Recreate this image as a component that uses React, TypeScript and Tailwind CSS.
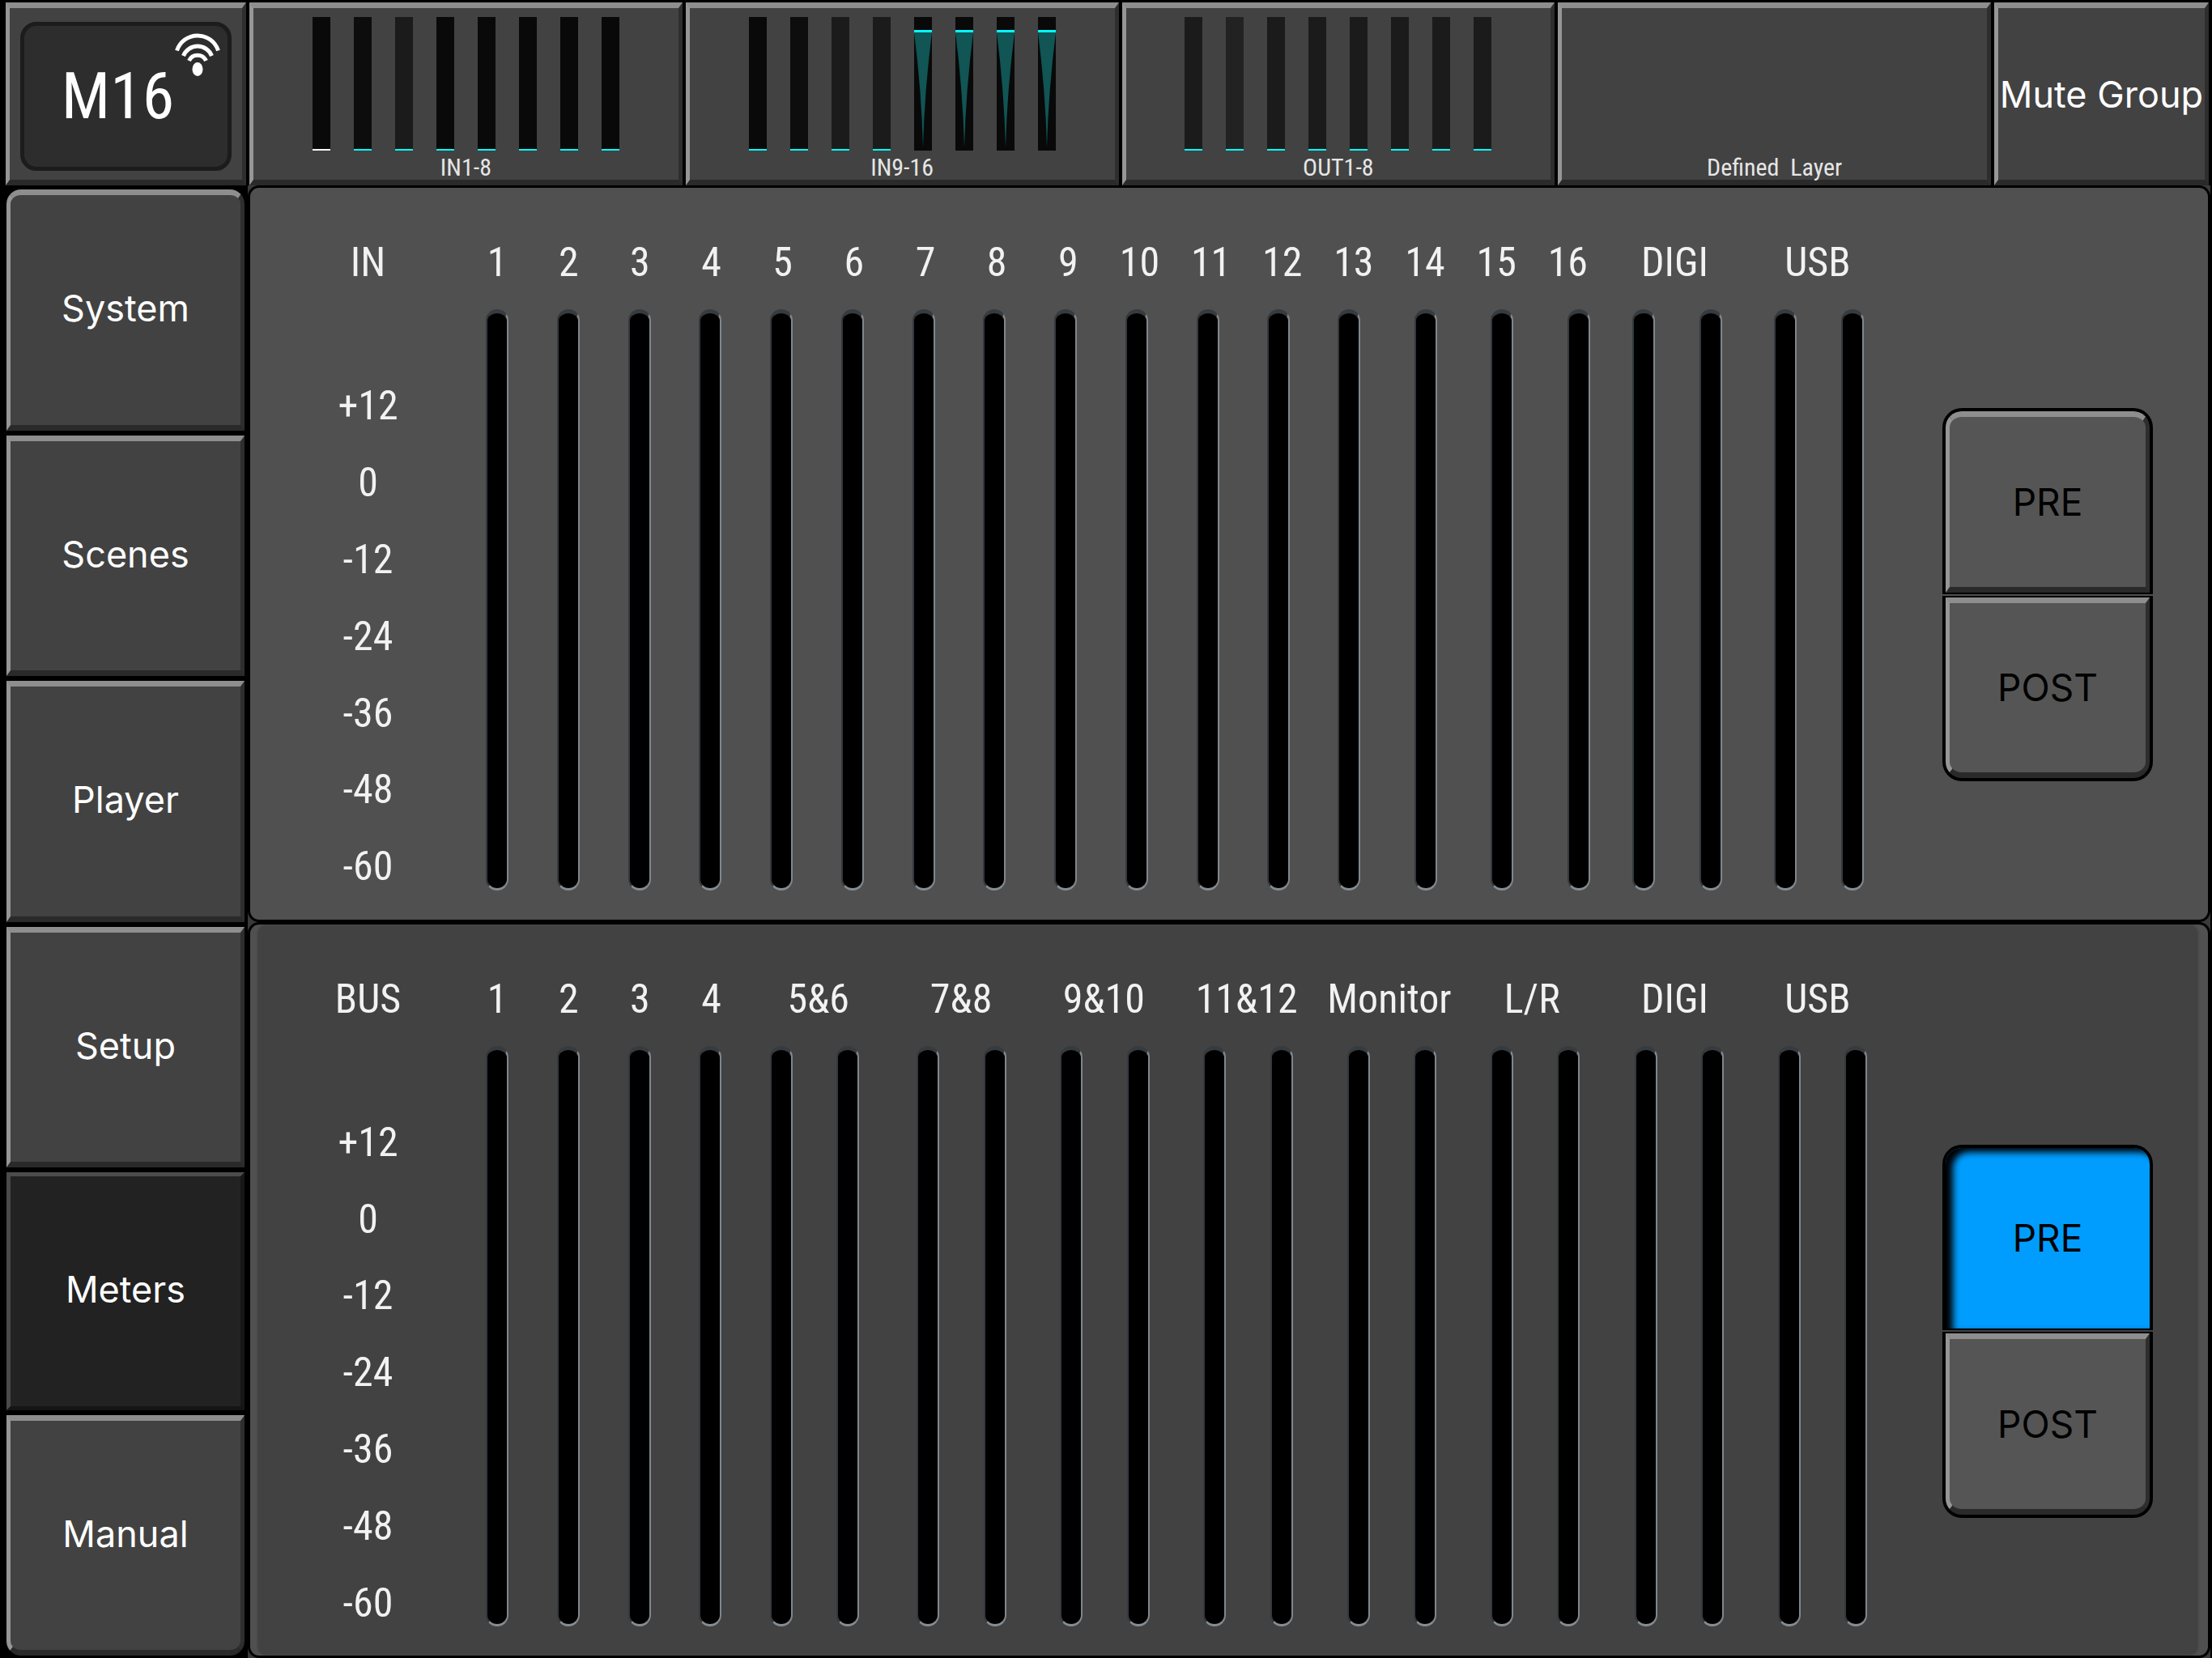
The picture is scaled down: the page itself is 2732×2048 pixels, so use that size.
import { useState } from 'react';
import clsx from 'clsx';

type Meter = { shade: string; level?: 'low' | 'selected' | 'peak' };
type Label = { text: string; span?: number };

const DARK = 'bg-[#090909]';
const MID = 'bg-[#0d0d0d]';
const SOFT = 'bg-[#1b1b1b]';

const layers: { name: string; meters: Meter[] }[] = [
  {
    name: 'IN1-8',
    meters: [
      { shade: DARK, level: 'selected' },
      { shade: MID },
      { shade: SOFT },
      { shade: DARK },
      { shade: DARK },
      { shade: DARK },
      { shade: DARK },
      { shade: DARK },
    ],
  },
  {
    name: 'IN9-16',
    meters: [
      { shade: DARK },
      { shade: MID },
      { shade: SOFT },
      { shade: SOFT },
      { shade: DARK, level: 'peak' },
      { shade: DARK, level: 'peak' },
      { shade: DARK, level: 'peak' },
      { shade: DARK, level: 'peak' },
    ],
  },
  {
    name: 'OUT1-8',
    meters: [
      { shade: SOFT },
      { shade: 'bg-[#222222]' },
      { shade: SOFT },
      { shade: SOFT },
      { shade: SOFT },
      { shade: SOFT },
      { shade: SOFT },
      { shade: SOFT },
    ],
  },
  { name: 'Defined\u00a0 Layer', meters: [] },
];

const menu = ['System', 'Scenes', 'Player', 'Setup', 'Meters', 'Manual'];
const scale = ['+12', '0', '-12', '-24', '-36', '-48', '-60'];

const inLabels: Label[] = [
  ...Array.from({ length: 16 }, (_, i) => ({ text: String(i + 1) })),
  { text: 'DIGI', span: 2 },
  { text: 'USB', span: 2 },
];

const busLabels: Label[] = [
  { text: '1' },
  { text: '2' },
  { text: '3' },
  { text: '4' },
  { text: '5&6', span: 2 },
  { text: '7&8', span: 2 },
  { text: '9&10', span: 2 },
  { text: '11&12', span: 2 },
  { text: 'Monitor', span: 2 },
  { text: 'L/R', span: 2 },
  { text: 'DIGI', span: 2 },
  { text: 'USB', span: 2 },
];

// distance from each slot to the next one, as relative weights
const inPitch = [88, 88, 87, 88, 88, 88, 87, 88, 88, 88, 87, 87, 95, 94, 95, 80, 83, 92, 83];
const busPitch = [88, 88, 87, 88, 82, 99, 83, 94, 83, 94, 83, 95, 82, 95, 82, 96, 82, 95, 82];

const bevel =
  'border-t-[7px] border-l-[5px] border-r-[5px] border-b-[7px] border-t-[#8e8e8e] border-l-[#969696] border-r-[#2e2e2e] border-b-[#2a2a2a]';
const narrow = "font-['Liberation_Sans_Narrow','Roboto_Condensed','Liberation_Sans',sans-serif]";

function MiniMeter({ shade, level = 'low' }: Meter) {
  return (
    <div className={clsx('flex w-[22px] flex-col', shade)}>
      {level === 'peak' ? (
        <>
          <div className="mt-4 h-[3px] bg-[#00ffff]" />
          <svg viewBox="0 0 22 142" className="h-[142px] w-full" preserveAspectRatio="none">
            <path d="M0 0H22Q13 70 11 142Q9 70 0 0Z" fill="#115555" />
          </svg>
        </>
      ) : (
        <div className={clsx('mt-auto h-[2px]', level === 'selected' ? 'bg-white' : 'bg-[#00ffff]')} />
      )}
    </div>
  );
}

function Logo() {
  return (
    <button className={clsx('flex w-[297px] shrink-0 bg-[#424242] px-[13px] pt-[17px] pb-[11px]', bevel)}>
      <div className="relative flex h-full w-full items-center justify-center rounded-[20px] border-[5px] border-[#1c1c1c] bg-[#2d2d2d] pr-5">
        <span className={clsx('text-[80px] leading-none text-white', narrow)}>M16</span>
        <svg viewBox="0 0 58 56" className="absolute top-2 right-2 h-14 w-[58px]" fill="none" stroke="#fff" strokeWidth="5">
          <path d="M3.5 22.5A26.8 26.8 0 0 1 54.5 22.5" />
          <path d="M11.5 29A18.8 18.8 0 0 1 46.5 29" />
          <path d="M18.5 35A11.6 11.6 0 0 1 39.5 35" />
          <ellipse cx="29" cy="45.5" rx="6.5" ry="8.5" fill="#fff" stroke="none" />
        </svg>
      </div>
    </button>
  );
}

function PrePost({ initial }: { initial?: string }) {
  const [mode, setMode] = useState(initial);

  return (
    <div className="flex h-[461px] w-[260px] flex-col gap-[2px]">
      {['PRE', 'POST'].map((name, i) => (
        <div
          key={name}
          className={clsx('flex flex-1 bg-black px-1', i === 0 ? 'rounded-t-[24px] pt-1 pb-[2px]' : 'rounded-b-[24px] pt-[2px] pb-1')}
        >
          <button
            onClick={() => setMode(name)}
            aria-pressed={mode === name}
            className={clsx(
              'flex-1 text-[46px] leading-none text-black',
              i === 0 ? 'rounded-t-[20px]' : 'rounded-b-[20px]',
              mode === name ? 'bg-[#009dff] shadow-[inset_9px_5px_9px_#000]' : ['bg-[#555555]', bevel],
            )}
          >
            {name}
          </button>
        </div>
      ))}
    </div>
  );
}

type PanelProps = {
  title: string;
  labels: Label[];
  pitch: number[];
  className: string;
  slotsClassName: string;
  initial?: string;
};

function MeterPanel({ title, labels, pitch, className, slotsClassName, initial }: PanelProps) {
  const columns = pitch.map((p) => `minmax(0,${p}fr)`).join(' ') + ' 28px';

  return (
    <section className={clsx('flex flex-1 rounded-[14px] border-[3px] border-black', className)}>
      <div className={clsx('flex w-[261px] flex-col pl-[30px] text-center text-[50px] leading-none text-[#f2f2f2]', narrow)}>
        <h2 className="flex h-[150px] items-center justify-center pt-[34px]">{title}</h2>
        <div className="flex flex-1 flex-col pt-[72px] pb-[18px]">
          {scale.map((s) => (
            <span key={s} className="flex flex-1 items-center justify-center">
              {s}
            </span>
          ))}
        </div>
      </div>

      <div className="flex flex-1 flex-col">
        <div
          className={clsx(
            'grid h-[150px] grid-cols-[repeat(20,minmax(0,1fr))] items-center pt-[34px] pr-1 text-center text-[50px] leading-none text-[#f2f2f2]',
            narrow,
          )}
        >
          {labels.map((l) => (
            <span key={l.text} className={clsx('whitespace-nowrap', l.span === 2 && 'col-span-2')}>
              {l.text}
            </span>
          ))}
        </div>
        <div className={clsx('grid flex-1 pb-[36px] pl-[30px]', slotsClassName)} style={{ gridTemplateColumns: columns }}>
          {[...pitch, 28].map((_, i) => (
            <div
              key={i}
              className="w-7 rounded-full border-t-[5px] border-r-2 border-b-[3px] border-l-2 border-t-[#363b40] border-r-[#7f878d] border-b-[#858d92] border-l-[#34393e] bg-black"
            />
          ))}
        </div>
      </div>

      <div className="flex w-[390px] justify-center pt-[272px] pr-[6px]">
        <PrePost initial={initial} />
      </div>
    </section>
  );
}

export default function App() {
  const [page, setPage] = useState('Meters');

  return (
    <div className="flex min-h-screen flex-col bg-black font-['Inter',sans-serif] text-[45px] leading-none text-white">
      <header className="flex h-[229px] gap-1 pt-[3px] pr-1 pl-[7px]">
        <Logo />
        {layers.map(({ name, meters }) => (
          <button key={name} className={clsx('flex flex-1 flex-col items-center justify-end bg-[#424242]', bevel)}>
            <div className="flex h-[165px] gap-[29px]">
              {meters.map((m, i) => (
                <MiniMeter key={i} {...m} />
              ))}
            </div>
            <span className={clsx('pt-[6px] text-[30px] leading-[30px] text-[#e6e6e6]', narrow)}>{name}</span>
          </button>
        ))}
        <button className={clsx('flex w-[265px] shrink-0 items-center justify-center bg-[#424242] whitespace-nowrap', bevel)}>
          Mute Group
        </button>
      </header>

      <div className="flex flex-1">
        <nav className="flex w-[306px] flex-col gap-[6px] pt-[5px] pr-1 pb-[3px] pl-2">
          {menu.map((item) => (
            <button
              key={item}
              onClick={() => setPage(item)}
              className={clsx(
                'flex-1 pb-1 first:rounded-t-[18px] last:rounded-b-[18px]',
                page === item
                  ? 'border-[5px] border-t-[#4c4c4c] border-r-[#171717] border-b-[#151515] border-l-[#4a4a4a] bg-[#222222]'
                  : ['bg-[#424242]', bevel],
              )}
            >
              {item}
            </button>
          ))}
        </nav>

        <main className="mr-[2px] flex flex-1 flex-col bg-[#3a3a3a]">
          <MeterPanel title="IN" labels={inLabels} pitch={inPitch} slotsClassName="pr-[35px]" className="bg-[#505050]" />
          <MeterPanel
            title="BUS"
            labels={busLabels}
            pitch={busPitch}
            initial="PRE"
            slotsClassName="pr-[31px]"
            className="bg-[#424242] shadow-[inset_9px_0_2px_#505050,inset_-12px_0_2px_#505050]"
          />
        </main>
      </div>
    </div>
  );
}
